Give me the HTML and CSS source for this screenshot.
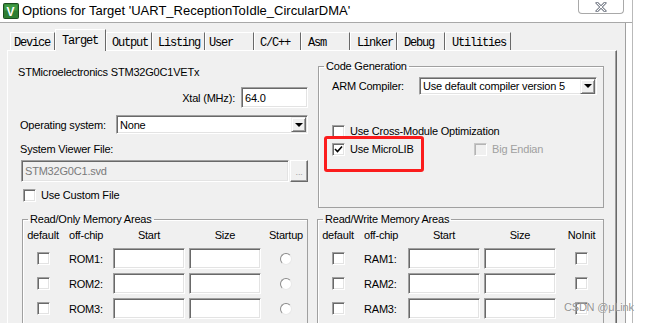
FILE: index.html
```html
<!DOCTYPE html>
<html lang="en">
<head>
    <meta charset="UTF-8">
    <title>Options for Target</title>
    <link rel="stylesheet" href="styles.css">
</head>
<body>
    <div class="window">
        <div class="titlebar">
            <svg class="app-icon" viewBox="0 0 16 16">
                <rect x="0.5" y="0.5" width="15" height="15" rx="1" fill="#2e7d32" stroke="#1b4d1f"/>
                <rect x="1.5" y="1.5" width="13" height="6" fill="#4caf50" opacity="0.6"/>
                <text x="7.5" y="12.5" text-anchor="middle" font-family="Liberation Sans, sans-serif" font-size="12" font-weight="bold" fill="#fff">V</text>
            </svg>
            <span class="title">Options for Target 'UART_ReceptionToIdle_CircularDMA'</span>
            <div class="close-btn">
                <svg width="12" height="10" viewBox="0 0 12 10">
                    <path d="M2 1 L10 9 M10 1 L2 9" stroke="#8a8f99" stroke-width="3" stroke-linecap="square"/>
                    <path d="M2 1 L10 9 M10 1 L2 9" stroke="#fff" stroke-width="1"/>
                </svg>
            </div>
        </div>

        <div class="client">
            <div class="tabs">
                <div class="tab tab-device">Device</div>
                <div class="tab tab-target active">Target</div>
                <div class="tab tab-output">Output</div>
                <div class="tab tab-listing">Listing</div>
                <div class="tab tab-user">User</div>
                <div class="tab tab-cc">C/C++</div>
                <div class="tab tab-asm">Asm</div>
                <div class="tab tab-linker">Linker</div>
                <div class="tab tab-debug">Debug</div>
                <div class="tab tab-utilities">Utilities</div>
            </div>

            <div class="panel">
                <div class="top-row">
                    <div class="device-col">
                        <div class="device-name">STMicroelectronics STM32G0C1VETx</div>
                        <div class="xtal-row">
                            <span>Xtal (MHz):</span>
                            <div class="edit xtal-edit">64.0</div>
                        </div>
                        <div class="os-row">
                            <span class="os-label">Operating system:</span>
                            <div class="combo os-combo">
                                <span>None</span>
                                <span class="combo-btn"><i class="arrow"></i></span>
                            </div>
                        </div>
                        <div class="svd-label">System Viewer File:</div>
                        <div class="svd-row">
                            <div class="edit disabled svd-edit">STM32G0C1.svd</div>
                            <div class="browse-btn">...</div>
                        </div>
                        <div class="check-row custom-file">
                            <span class="check"></span>
                            <span>Use Custom File</span>
                        </div>
                    </div>

                    <fieldset class="group code-gen">
                        <legend>Code Generation</legend>
                        <div class="compiler-row">
                            <span class="compiler-label">ARM Compiler:</span>
                            <div class="combo compiler-combo">
                                <span>Use default compiler version 5</span>
                                <span class="combo-btn"><i class="arrow"></i></span>
                            </div>
                        </div>
                        <div class="opts">
                            <div class="check-row">
                                <span class="check"></span>
                                <span>Use Cross-Module Optimization</span>
                            </div>
                            <div class="check-row">
                                <span class="check checked">
                                    <svg width="9" height="9" viewBox="0 0 9 9"><path d="M1 4 L3.5 6.5 L8 1.5" fill="none" stroke="#000" stroke-width="1.6"/></svg>
                                </span>
                                <span class="microlib-label">Use MicroLIB</span>
                                <span class="check disabled"></span>
                                <span class="muted">Big Endian</span>
                            </div>
                            <div class="highlight"></div>
                        </div>
                    </fieldset>
                </div>

                <div class="mem-row">
                    <fieldset class="group mem rom">
                        <legend>Read/Only Memory Areas</legend>
                        <div class="mem-grid">
                            <span class="head">default</span>
                            <span class="head left">off-chip</span>
                            <span class="head start">Start</span>
                            <span class="head start">Size</span>
                            <span class="head">Startup</span>

                            <span class="cell"><span class="check"></span></span>
                            <span class="cell left">ROM1:</span>
                            <div class="edit mem-edit"></div>
                            <div class="edit mem-edit"></div>
                            <span class="cell"><span class="radio"></span></span>

                            <span class="cell"><span class="check"></span></span>
                            <span class="cell left">ROM2:</span>
                            <div class="edit mem-edit"></div>
                            <div class="edit mem-edit"></div>
                            <span class="cell"><span class="radio"></span></span>

                            <span class="cell"><span class="check"></span></span>
                            <span class="cell left">ROM3:</span>
                            <div class="edit mem-edit"></div>
                            <div class="edit mem-edit"></div>
                            <span class="cell"><span class="radio"></span></span>
                        </div>
                    </fieldset>

                    <fieldset class="group mem ram">
                        <legend>Read/Write Memory Areas</legend>
                        <div class="mem-grid">
                            <span class="head">default</span>
                            <span class="head left">off-chip</span>
                            <span class="head start">Start</span>
                            <span class="head start">Size</span>
                            <span class="head">NoInit</span>

                            <span class="cell"><span class="check"></span></span>
                            <span class="cell left">RAM1:</span>
                            <div class="edit mem-edit"></div>
                            <div class="edit mem-edit"></div>
                            <span class="cell"><span class="check"></span></span>

                            <span class="cell"><span class="check"></span></span>
                            <span class="cell left">RAM2:</span>
                            <div class="edit mem-edit"></div>
                            <div class="edit mem-edit"></div>
                            <span class="cell"><span class="check"></span></span>

                            <span class="cell"><span class="check"></span></span>
                            <span class="cell left">RAM3:</span>
                            <div class="edit mem-edit"></div>
                            <div class="edit mem-edit"></div>
                            <span class="cell"><span class="check"></span></span>
                        </div>
                    </fieldset>
                </div>
            </div>
        </div>
    </div>

    <div class="watermark">CSDN @μLink</div>
</body>
</html>
```

FILE: styles.css
```css
* {
    margin: 0;
    padding: 0;
    box-sizing: border-box;
}

body {
    position: relative;
    width: 647px;
    height: 323px;
    overflow: hidden;
    background: #fff;
    font-family: 'Liberation Sans', Arial, sans-serif;
    font-size: 11px;
    letter-spacing: -0.2px;
    color: #000;
}

.window {
    width: 633px;
    height: 323px;
    border-right: 1px solid #b9b9b9;
    overflow: hidden;
}

/* title bar */
.titlebar {
    display: flex;
    align-items: flex-start;
    height: 23px;
    padding: 0 8px 0 3px;
    background: #fff;
    border-bottom: 1px solid #a8a8a8;
}

.app-icon {
    width: 16px;
    height: 16px;
    margin-top: 3px;
}

.title {
    margin-left: 3px;
    font-size: 13px;
    letter-spacing: 0;
    line-height: 22px;
}

.close-btn {
    margin-left: auto;
    width: 46px;
    height: 14px;
    border: 1px solid #a9a9a9;
    border-top: none;
    border-radius: 0 0 4px 4px;
    display: flex;
    justify-content: center;
    align-items: center;
}

/* dialog body */
.client {
    width: 626px;
    height: 300px;
    padding-top: 6px;
    background: #f0f0f0;
    border-right: 1px solid #a0a0a0;
}

.tabs {
    display: flex;
    align-items: flex-end;
    height: 21px;
    padding-left: 10px;
}

.tab {
    height: 18px;
    padding: 2px 0 0 3px;
    border: 1px solid;
    border-color: #fff #696969 transparent #fff;
    border-bottom: none;
    font-family: 'Liberation Mono', 'Courier New', monospace;
    font-size: 12px;
    letter-spacing: -1.2px;
    line-height: 16px;
    white-space: nowrap;
}

.tab.active {
    position: relative;
    z-index: 1;
    height: 22px;
    margin-bottom: -1px;
    padding: 3px 0 0 6px;
    background: #f0f0f0;
}

.tab-device { width: 45px; }
.tab-target { width: 51px; }
.tab-output { width: 46px; padding-left: 5px; }
.tab-listing { width: 53px; padding-left: 5px; }
.tab-user { width: 49px; }
.tab-cc { width: 47px; padding-left: 5px; }
.tab-asm { width: 49px; padding-left: 6px; }
.tab-linker { width: 47px; padding-left: 6px; }
.tab-debug { width: 48px; padding-left: 6px; }
.tab-utilities { width: 66px; padding-left: 6px; }

.panel {
    width: 610px;
    height: 280px;
    margin-left: 7px;
    padding-left: 10px;
    border-top: 1px solid #fff;
    border-left: 1px solid #fff;
    border-right: 1px solid #696969;
    box-shadow: inset -1px 0 #a0a0a0;
}

.top-row {
    display: flex;
    height: 157px;
}

.device-col {
    width: 290px;
}

.device-name {
    margin-top: 14px;
    line-height: 14px;
}

.xtal-row {
    display: flex;
    justify-content: flex-end;
    align-items: center;
    gap: 6px;
    margin-top: 8px;
}

.os-row {
    display: flex;
    align-items: center;
    margin-top: 7px;
    margin-left: 2px;
}

.os-label {
    width: 96px;
}

.svd-label {
    margin: 8px 0 0 2px;
    line-height: 14px;
}

.svd-row {
    display: flex;
    margin: 4px 0 0 3px;
}

.custom-file {
    margin: 6px 0 0 5px;
}

/* controls */
.edit {
    height: 21px;
    padding: 2px 3px;
    background: #fff;
    border: 1px solid;
    border-color: #a0a0a0 #fff #fff #a0a0a0;
    box-shadow: inset 1px 1px #696969, inset -1px -1px #e3e3e3;
    line-height: 16px;
    white-space: nowrap;
}

.edit.disabled {
    background: #f0f0f0;
    color: #7a7a7a;
}

.xtal-edit {
    width: 67px;
}

.svd-edit {
    width: 269px;
    height: 22px;
}

.browse-btn {
    width: 18px;
    height: 22px;
    margin-left: 1px;
    border: 1px solid;
    border-color: #fff #696969 #696969 #fff;
    box-shadow: inset -1px -1px #a0a0a0;
    color: #a0a0a0;
    font-size: 9px;
    line-height: 22px;
    text-align: center;
}

.combo {
    display: flex;
    align-items: center;
    justify-content: space-between;
    padding: 0 1px 0 3px;
    background: #fff;
    border: 1px solid;
    border-color: #a0a0a0 #fff #fff #a0a0a0;
    box-shadow: inset 1px 1px #696969, inset -1px -1px #e3e3e3;
    white-space: nowrap;
    overflow: hidden;
}

.os-combo {
    width: 192px;
    height: 19px;
}

.compiler-combo {
    width: 178px;
    height: 18px;
}

.combo-btn {
    display: flex;
    flex-shrink: 0;
    justify-content: center;
    align-items: center;
    width: 15px;
    height: 15px;
    background: #f0f0f0;
    border: 1px solid;
    border-color: #f0f0f0 #696969 #696969 #f0f0f0;
    box-shadow: inset 1px 1px #fff, inset -1px -1px #a0a0a0;
}

.arrow {
    width: 0;
    height: 0;
    border-left: 4px solid transparent;
    border-right: 4px solid transparent;
    border-top: 4px solid #000;
}

.check-row {
    display: flex;
    align-items: center;
    height: 14px;
    line-height: 14px;
    white-space: nowrap;
}

.check {
    display: inline-flex;
    flex-shrink: 0;
    justify-content: center;
    align-items: center;
    width: 13px;
    height: 13px;
    margin-right: 5px;
    background: #fff;
    border: 1px solid;
    border-color: #a0a0a0 #fff #fff #a0a0a0;
    box-shadow: inset 1px 1px #696969, inset -1px -1px #e3e3e3;
}

.check.disabled {
    background: #f0f0f0;
    border-color: #c8c8c8 #fff #fff #c8c8c8;
    box-shadow: inset 1px 1px #b4b4b4;
}

.muted {
    color: #a0a0a0;
}

.radio {
    display: inline-block;
    width: 12px;
    height: 12px;
    background: #fff;
    border: 1px solid;
    border-color: #8a8a8a #e8e8e8 #e8e8e8 #8a8a8a;
    border-radius: 50%;
}

/* group boxes */
.group {
    padding: 0;
    border: 1px solid #a0a0a0;
    box-shadow: inset 1px 1px #fff;
}

.group legend {
    margin-left: 5px;
    padding: 0 2px;
    line-height: 14px;
}

.code-gen {
    width: 286px;
    height: 149px;
    margin: 8px 0 0 10px;
}

.compiler-row {
    display: flex;
    align-items: center;
    margin: 4px 0 0 13px;
}

.compiler-label {
    width: 87px;
}

.opts {
    position: relative;
    margin: 29px 0 0 13px;
}

.opts .check-row + .check-row {
    margin-top: 4px;
}

.microlib-label {
    width: 124px;
}

.highlight {
    position: absolute;
    left: -8px;
    top: 12px;
    width: 100px;
    height: 36px;
    border: 3px solid #fb1c1c;
    border-radius: 3px;
}

.mem-row {
    display: flex;
    margin-top: 4px;
}

.mem.rom {
    width: 286px;
    height: 120px;
    margin-left: 4px;
}

.mem.ram {
    width: 287px;
    height: 120px;
    margin-left: 9px;
}

.mem-grid {
    display: grid;
    grid-template-columns: 40px 50px 76px 76px 1fr;
    grid-template-rows: 14px repeat(3, 21px);
    row-gap: 4px;
    margin-top: 4px;
    align-items: center;
}

.mem-grid .head {
    text-align: center;
    line-height: 14px;
    margin-bottom: 4px;
}

.mem-grid .head.start {
    width: 72px;
}

.mem-grid .left {
    text-align: left;
    padding-left: 6px;
}

.mem-grid .cell {
    display: flex;
    justify-content: center;
    align-items: center;
}

.mem-grid .cell.left {
    justify-content: flex-start;
}

.mem-grid .cell .check {
    margin-right: 0;
}

.mem-edit {
    width: 72px;
}

.watermark {
    position: absolute;
    left: 564px;
    top: 301px;
    color: rgba(110, 110, 110, 0.75);
    font-size: 11px;
    letter-spacing: -0.2px;
    white-space: nowrap;
    text-shadow: 0 0 1px #fff;
}
```
